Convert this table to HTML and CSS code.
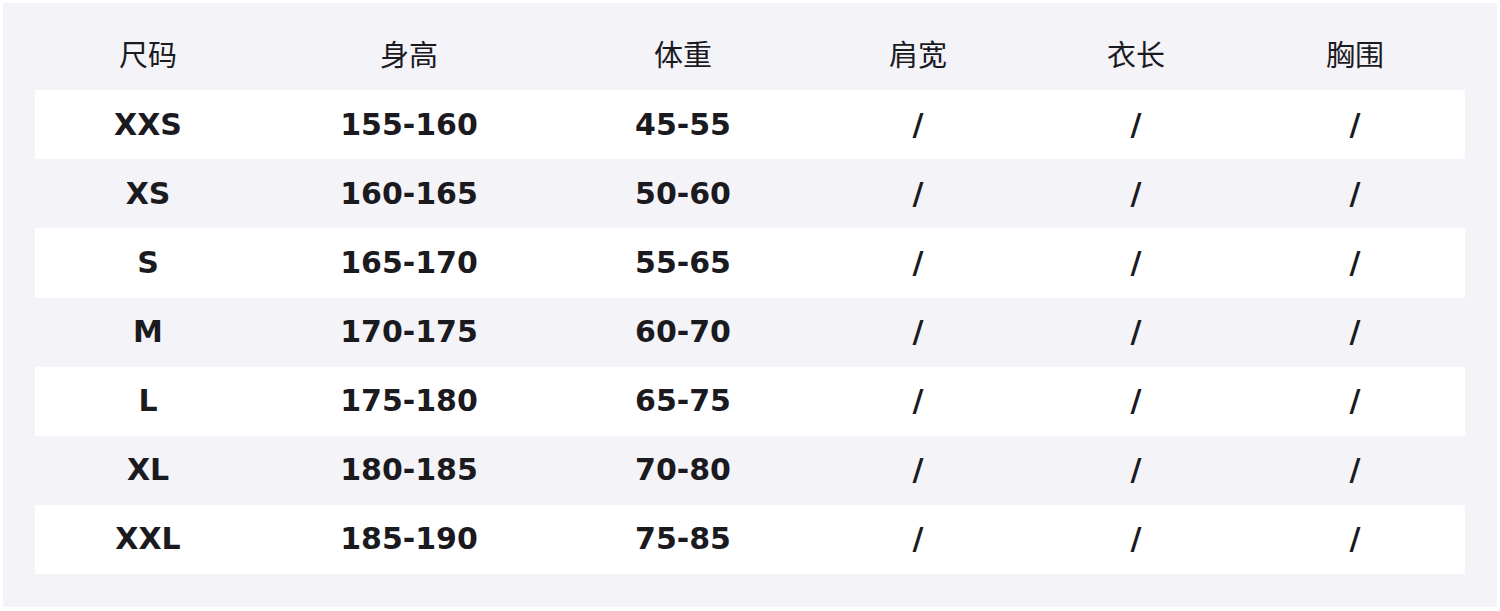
FILE: index.html
```html
<!DOCTYPE html>
<html lang="zh">
<head>
<meta charset="utf-8">
<title>尺码表</title>
<link rel="stylesheet" href="styles.css">
</head>
<body>
<div class="sheet">
  <div class="size-table">
    <div class="row head">
      <div class="cell">尺码</div><div class="cell">身高</div><div class="cell">体重</div><div class="cell">肩宽</div><div class="cell">衣长</div><div class="cell">胸围</div>
    </div>
    <div class="row odd"><div class="cell">XXS</div><div class="cell">155-160</div><div class="cell">45-55</div><div class="cell">/</div><div class="cell">/</div><div class="cell">/</div></div>
    <div class="row"><div class="cell">XS</div><div class="cell">160-165</div><div class="cell">50-60</div><div class="cell">/</div><div class="cell">/</div><div class="cell">/</div></div>
    <div class="row odd"><div class="cell">S</div><div class="cell">165-170</div><div class="cell">55-65</div><div class="cell">/</div><div class="cell">/</div><div class="cell">/</div></div>
    <div class="row"><div class="cell">M</div><div class="cell">170-175</div><div class="cell">60-70</div><div class="cell">/</div><div class="cell">/</div><div class="cell">/</div></div>
    <div class="row odd"><div class="cell">L</div><div class="cell">175-180</div><div class="cell">65-75</div><div class="cell">/</div><div class="cell">/</div><div class="cell">/</div></div>
    <div class="row"><div class="cell">XL</div><div class="cell">180-185</div><div class="cell">70-80</div><div class="cell">/</div><div class="cell">/</div><div class="cell">/</div></div>
    <div class="row odd"><div class="cell">XXL</div><div class="cell">185-190</div><div class="cell">75-85</div><div class="cell">/</div><div class="cell">/</div><div class="cell">/</div></div>
  </div>
</div>
</body>
</html>
```
FILE: styles.css
```css
html, body {
  margin: 0;
  padding: 0;
  background: #ffffff;
}
body {
  padding: 3px;
  width: 1500px;
  height: 611px;
  box-sizing: border-box;
}
.sheet {
  background: #f4f3f8;
  height: 604px;
  box-sizing: border-box;
  padding: 18px 32px 33px 32px;
}
.size-table {
  display: grid;
  grid-template-rows: repeat(8, 69.125px);
  color: #1b1a1f;
}
.row {
  display: grid;
  grid-template-columns: 226px 296px 252px 218px 218px 220px;
  align-items: center;
}
.row.odd {
  background: #ffffff;
}
.cell {
  text-align: center;
  font-family: "DejaVu Sans", sans-serif;
  font-weight: 700;
  font-size: 30px;
  line-height: 1;
}
.head .cell {
  font-family: "Noto Sans CJK SC", sans-serif;
  font-weight: 400;
  font-size: 29px;
  padding-bottom: 5px;
}
```
